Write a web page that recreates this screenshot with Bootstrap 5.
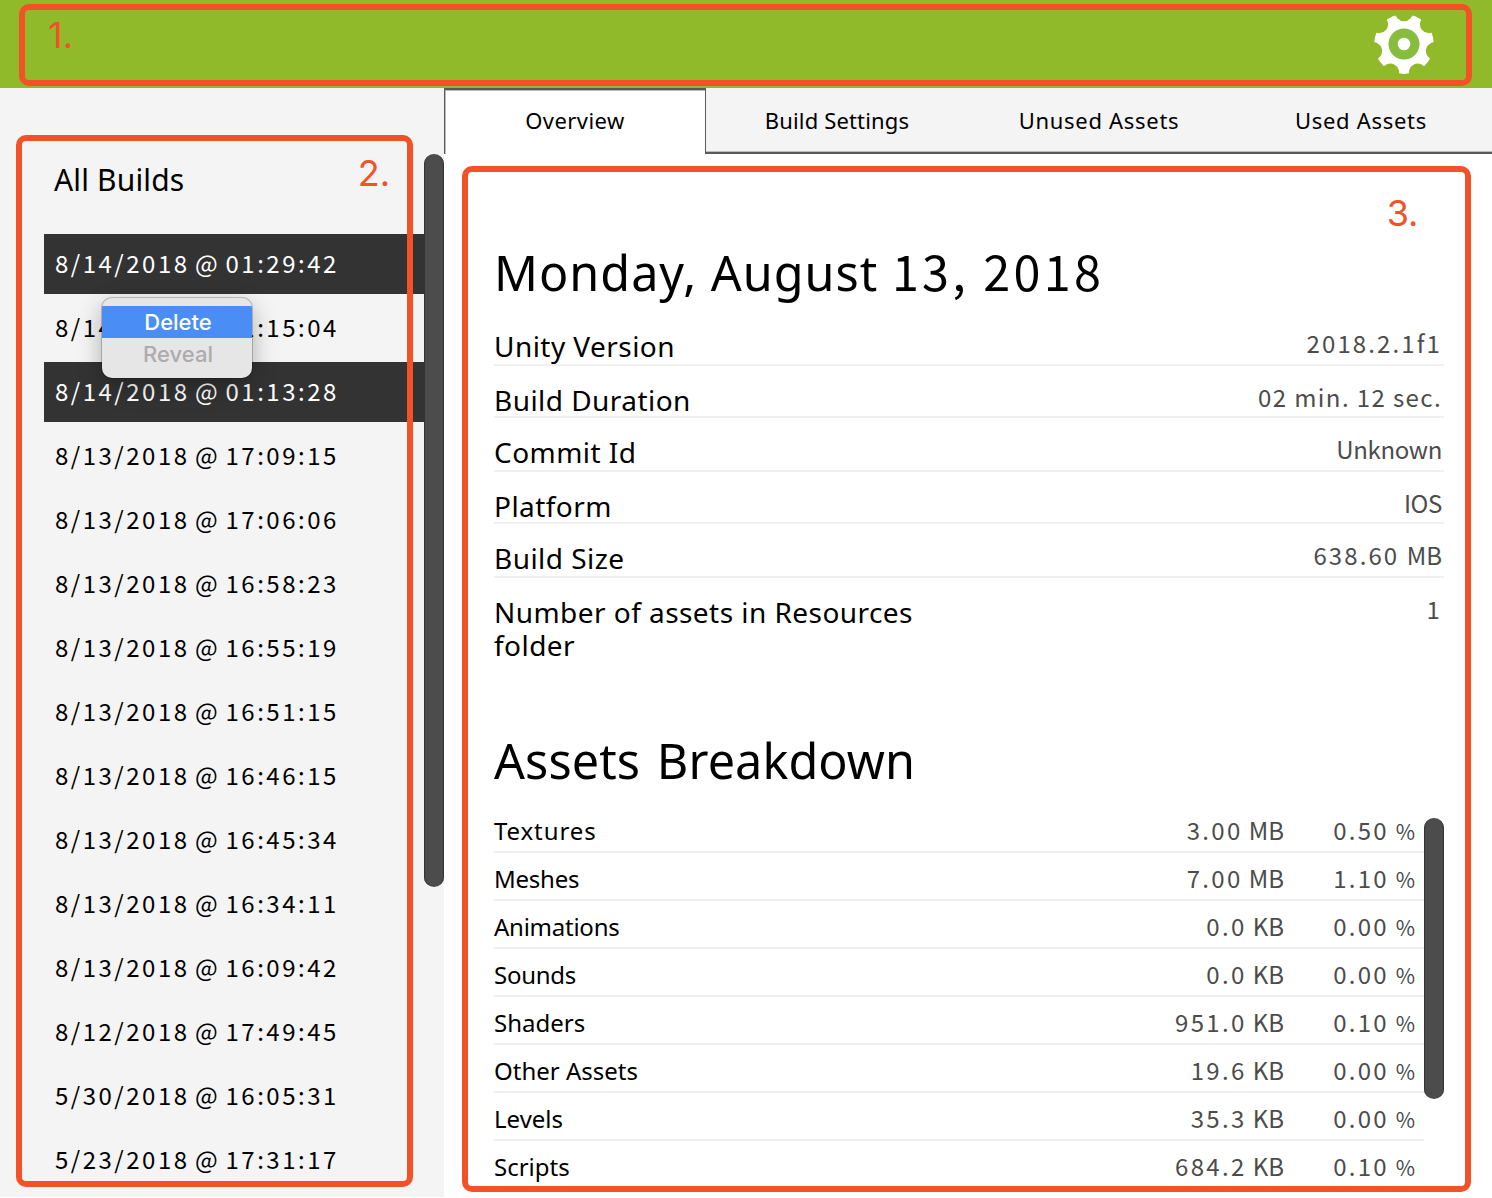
<!DOCTYPE html>
<html lang="en">
<head>
<meta charset="utf-8">
<meta name="viewport" content="width=device-width, initial-scale=1">
<title>Build Report</title>
<link rel="stylesheet" href="https://cdn.jsdelivr.net/npm/bootstrap@5.3.0/dist/css/bootstrap.min.css">
<style>
  body { font-family: "Noto Sans", sans-serif; color: #000; background: #fff; width: 1492px; height: 1198px; overflow: hidden; }
  .num { font-family: "Noto Sans CJK SC", "Noto Sans", sans-serif; }
  .top-bar { height: 88px; background: #91ba2a; padding-right: 58px; }
  .side-panel { width: 444px; height: 1109px; background: #f4f4f4; padding-left: 44px; }
  .side-title { font-size: 30px; line-height: 36px; letter-spacing: .15px; padding: 74px 0 36px 10px; }
  .build-list { gap: 4px; }
  .build-item { height: 60px; padding: 0 0 3px 11px; font-size: 24px; letter-spacing: 2.5px; word-spacing: -2.5px; }
  .build-item.picked { background: #333; color: #fff; }
  .thumb { width: 20px; border-radius: 10px; background: #4c4c4c; box-shadow: inset 2px 0 1px -1px #333, inset -2px 0 1px -1px #333; }
  .thumb-side { height: 733px; margin-top: 66px; }
  .thumb-assets { height: 281px; margin-top: 13px; }

  .tab-strip { height: 66px; flex-wrap: nowrap; border: 0; }
  .tab-strip .nav-link { height: 66px; padding: 0 0 1px; border: 0; border-bottom: 2px solid #5a5a5d; border-radius: 0; background: #f4f4f4; color: #000; font-size: 22px; line-height: 65px; letter-spacing: .7px; box-shadow: inset 0 -1px #bbb; }
  .tab-strip .nav-link.active { background: #fff; border: 2px solid #5a5a5d; border-left-width: 1px; border-bottom: 0; border-right-width: 1px; line-height: 60px; letter-spacing: .45px; box-shadow: inset 1px 1px #bbb; }
  .tab-strip .nav-link.tr-slim { letter-spacing: .15px; }
  .tab-strip .tab-cell { flex: 0 0 262px; }

  .report { padding: 86px 48px 0 50px; }
  .big-title { font-size: 48.5px; line-height: 60px; font-weight: 400; margin: 0; white-space: nowrap; }
  .title-date { letter-spacing: 1px; }
  .title-date .num { letter-spacing: 3.3px; }
  .title-assets { letter-spacing: .1px; word-spacing: 4px; }
  .info-table { padding-top: 28px; height: 428px; }
  .info-row { height: 34px; margin-bottom: 18px; border-bottom: 2px solid #f0f0f0; }
  .info-row:nth-child(odd) { height: 36px; }
  .info-row:last-child { border: 0; height: 68px; }
  .info-label { font-size: 28px; line-height: 33px; width: 440px; letter-spacing: .45px; }
  .info-value { font-size: 24px; line-height: 25px; color: #4c4c4c; white-space: nowrap; padding-right: 2px; }
  .asset-table { padding-top: 15px; }
  .asset-rows { width: 930px; }
  .asset-row { height: 48px; border-bottom: 2px solid #f0f0f0; font-size: 24px; line-height: 46px; }
  .asset-row:last-child { border-color: transparent; }
  .asset-name { padding-top: 3px; }
  .asset-size, .asset-share { color: #4c4c4c; padding-top: 2px; text-align: right; letter-spacing: 2.3px; }
  .asset-size { width: 170px; word-spacing: -1.5px; }
  .asset-share { width: 140px; padding-right: 9px; word-spacing: -1px; }
  .unit { letter-spacing: 0; }
  .pct { letter-spacing: 0; font-size: 21px; line-height: 1; }
  .tr-wide { letter-spacing: 2.1px; }
  .tr-mid { letter-spacing: 1.4px; }
  .tr-text { letter-spacing: .9px; }
  .tr-tight { letter-spacing: -.36px; }
  .tr-none { letter-spacing: -.25px; }

  .context-menu { left: 102px; top: 298px; width: 150px; height: 80px; padding-top: 8px; border-radius: 10px; background: #e6e6e6; box-shadow: 0 0 0 1px rgba(0,0,0,.2), 0 8px 24px rgba(0,0,0,.3); font: 500 22px/32px Inter, sans-serif; text-align: center; color: #acacac; overflow: hidden; }
  .context-menu div { padding-left: 2px; }
  .context-menu .chosen { background: #4a8ef5; color: #fff; }
  .note-box { border: 6px solid #f15228; border-radius: 10px; color: #f15228; font: 400 36px/44px Inter, sans-serif; pointer-events: none; }
  .note-box span { position: absolute; }
  .note-top { left: 19px; top: 4px; width: 1453px; height: 82px; }
  .note-top span { left: 23px; top: 3px; }
  .note-side { left: 16px; top: 135px; width: 397px; height: 1052px; }
  .note-side span { right: 17px; top: 10px; }
  .note-main { left: 461.5px; top: 166px; width: 1009px; height: 1026px; }
  .note-main span { right: 46px; top: 19px; }
</style>
<script src="https://cdn.jsdelivr.net/npm/bootstrap@5.3.0/dist/js/bootstrap.bundle.min.js"></script>
</head>
<body class="position-relative">

<header class="top-bar d-flex align-items-center justify-content-end">
  <svg width="60" height="60" viewBox="-30 -30 60 60" role="img" aria-label="Settings">
    <mask id="teeth">
      <circle r="30" fill="#fff"/>
      <g fill="#000">
        <ellipse cy="-33" rx="9.3" ry="10.3"/>
        <ellipse cy="-33" rx="9.3" ry="10.3" transform="rotate(51.43)"/>
        <ellipse cy="-33" rx="9.3" ry="10.3" transform="rotate(102.86)"/>
        <ellipse cy="-33" rx="9.3" ry="10.3" transform="rotate(154.29)"/>
        <ellipse cy="-33" rx="9.3" ry="10.3" transform="rotate(205.71)"/>
        <ellipse cy="-33" rx="9.3" ry="10.3" transform="rotate(257.14)"/>
        <ellipse cy="-33" rx="9.3" ry="10.3" transform="rotate(308.57)"/>
      </g>
    </mask>
    <circle r="30" fill="#fff" mask="url(#teeth)"/>
    <circle r="15.5" fill="#86bd3c"/>
    <circle r="6.3" fill="#fff"/>
  </svg>
</header>

<div class="d-flex">
  <aside class="side-panel d-flex flex-shrink-0">
    <div class="flex-grow-1">
      <div class="side-title">All Builds</div>
      <div class="build-list d-flex flex-column num">
        <div class="build-item picked d-flex align-items-center">8/14/2018 @ 01:29:42</div>
        <div class="build-item d-flex align-items-center">8/14/2018 @ 01:15:04</div>
        <div class="build-item picked d-flex align-items-center">8/14/2018 @ 01:13:28</div>
        <div class="build-item d-flex align-items-center">8/13/2018 @ 17:09:15</div>
        <div class="build-item d-flex align-items-center">8/13/2018 @ 17:06:06</div>
        <div class="build-item d-flex align-items-center">8/13/2018 @ 16:58:23</div>
        <div class="build-item d-flex align-items-center">8/13/2018 @ 16:55:19</div>
        <div class="build-item d-flex align-items-center">8/13/2018 @ 16:51:15</div>
        <div class="build-item d-flex align-items-center">8/13/2018 @ 16:46:15</div>
        <div class="build-item d-flex align-items-center">8/13/2018 @ 16:45:34</div>
        <div class="build-item d-flex align-items-center">8/13/2018 @ 16:34:11</div>
        <div class="build-item d-flex align-items-center">8/13/2018 @ 16:09:42</div>
        <div class="build-item d-flex align-items-center">8/12/2018 @ 17:49:45</div>
        <div class="build-item d-flex align-items-center">5/30/2018 @ 16:05:31</div>
        <div class="build-item d-flex align-items-center">5/23/2018 @ 17:31:17</div>
      </div>
    </div>
    <div class="thumb thumb-side flex-shrink-0"></div>
  </aside>

  <main class="flex-grow-1">
    <ul class="nav nav-tabs tab-strip">
      <li class="nav-item tab-cell text-center"><a class="nav-link active">Overview</a></li>
      <li class="nav-item tab-cell text-center"><a class="nav-link tr-slim">Build Settings</a></li>
      <li class="nav-item tab-cell text-center"><a class="nav-link">Unused Assets</a></li>
      <li class="nav-item tab-cell text-center"><a class="nav-link">Used Assets</a></li>
    </ul>

    <section class="report">
      <h1 class="big-title title-date">Monday, August <span class="num">13, 2018</span></h1>
      <div class="info-table">
        <div class="info-row d-flex justify-content-between"><span class="info-label">Unity Version</span><span class="info-value num tr-wide">2018.2.1f1</span></div>
        <div class="info-row d-flex justify-content-between"><span class="info-label">Build Duration</span><span class="info-value num tr-mid">02 min. 12 sec.</span></div>
        <div class="info-row d-flex justify-content-between"><span class="info-label">Commit Id</span><span class="info-value num tr-tight">Unknown</span></div>
        <div class="info-row d-flex justify-content-between"><span class="info-label">Platform</span><span class="info-value num tr-tight">IOS</span></div>
        <div class="info-row d-flex justify-content-between"><span class="info-label">Build Size</span><span class="info-value num tr-wide">638.60 <span class="unit">MB</span></span></div>
        <div class="info-row d-flex justify-content-between"><span class="info-label">Number of assets in Resources folder</span><span class="info-value num tr-wide">1</span></div>
      </div>

      <h2 class="big-title title-assets">Assets Breakdown</h2>
      <div class="asset-table d-flex">
        <div class="asset-rows">
          <div class="asset-row d-flex"><span class="asset-name tr-text flex-grow-1">Textures</span><span class="asset-size num">3.00 <span class="unit">MB</span></span><span class="asset-share num">0.50 <span class="pct">%</span></span></div>
          <div class="asset-row d-flex"><span class="asset-name tr-none flex-grow-1">Meshes</span><span class="asset-size num">7.00 <span class="unit">MB</span></span><span class="asset-share num">1.10 <span class="pct">%</span></span></div>
          <div class="asset-row d-flex"><span class="asset-name tr-none flex-grow-1">Animations</span><span class="asset-size num">0.0 <span class="unit">KB</span></span><span class="asset-share num">0.00 <span class="pct">%</span></span></div>
          <div class="asset-row d-flex"><span class="asset-name tr-none flex-grow-1">Sounds</span><span class="asset-size num">0.0 <span class="unit">KB</span></span><span class="asset-share num">0.00 <span class="pct">%</span></span></div>
          <div class="asset-row d-flex"><span class="asset-name flex-grow-1">Shaders</span><span class="asset-size num">951.0 <span class="unit">KB</span></span><span class="asset-share num">0.10 <span class="pct">%</span></span></div>
          <div class="asset-row d-flex"><span class="asset-name flex-grow-1">Other Assets</span><span class="asset-size num">19.6 <span class="unit">KB</span></span><span class="asset-share num">0.00 <span class="pct">%</span></span></div>
          <div class="asset-row d-flex"><span class="asset-name flex-grow-1">Levels</span><span class="asset-size num">35.3 <span class="unit">KB</span></span><span class="asset-share num">0.00 <span class="pct">%</span></span></div>
          <div class="asset-row d-flex"><span class="asset-name flex-grow-1">Scripts</span><span class="asset-size num">684.2 <span class="unit">KB</span></span><span class="asset-share num">0.10 <span class="pct">%</span></span></div>
        </div>
        <div class="thumb thumb-assets"></div>
      </div>
    </section>
  </main>
</div>

<div class="context-menu position-absolute">
  <div class="chosen">Delete</div>
  <div>Reveal</div>
</div>

<div class="note-box note-top position-absolute"><span>1.</span></div>
<div class="note-box note-side position-absolute"><span>2.</span></div>
<div class="note-box note-main position-absolute"><span>3.</span></div>
</body>
</html>
